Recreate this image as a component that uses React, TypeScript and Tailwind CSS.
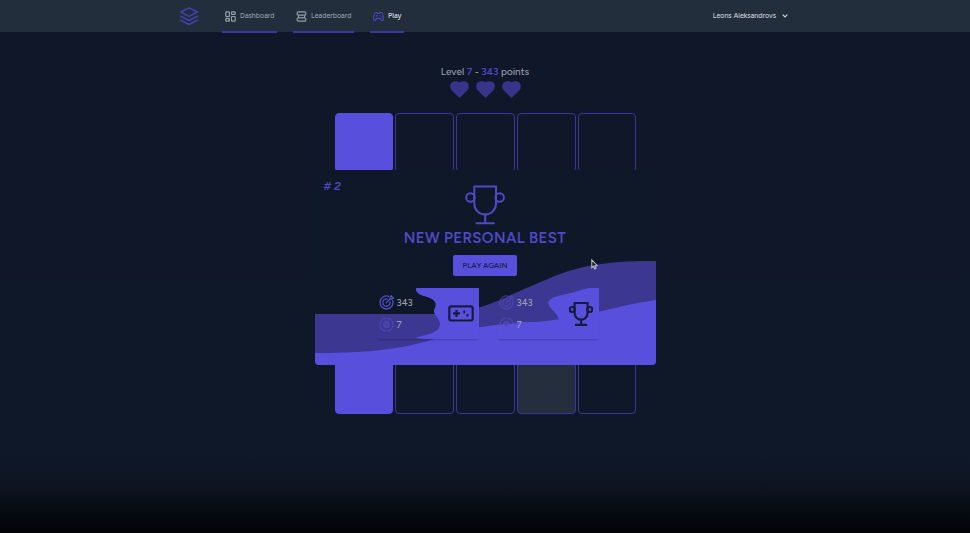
import React from "react";

const board = [
  "on", "off", "off", "off", "off",
  "off", "off", "off", "off", "off",
  "off", "off", "off", "off", "off",
  "off", "off", "off", "off", "off",
  "on", "off", "off", "hit", "off",
];

const cellStyles: Record<string, string> = {
  on: "bg-[#5850dc] border-[#5850dc]",
  off: "border-[#3a3599]",
  hit: "bg-[#252e3c] border-[#3a3599]",
};

function Layers() {
  return (
    <svg className="h-[19px] w-5" viewBox="0 0 20 19" fill="none" stroke="#4640b4" strokeWidth="1.500" strokeLinejoin="round" strokeLinecap="round">
      <path d="M9 1.300Q10 .8 11 1.300L18.300 5 11 8.900Q10 9.400 9 8.900L1.700 5Z" />
      <path d="M1.500 9.200 9 13Q10 13.500 11 13L18.500 9.200" />
      <path d="M1.500 13.200 9 17Q10 17.500 11 17L18.500 13.200" />
    </svg>
  );
}

function DashboardIcon() {
  return (
    <svg className="h-[11px] w-[11px]" viewBox="0 0 11 11" fill="none" stroke="#969ca9" strokeWidth="1.200">
      <rect x=".8" y=".8" width="3.600" height="4.800" rx=".6" />
      <rect x="6.500" y=".8" width="3.700" height="2.600" rx=".6" />
      <rect x=".8" y="7.700" width="3.600" height="2.500" rx=".6" />
      <rect x="6.500" y="5.500" width="3.700" height="4.700" rx=".6" />
    </svg>
  );
}

function LeaderboardIcon() {
  return (
    <svg className="h-[11px] w-[11px]" viewBox="0 0 11 11" fill="none" stroke="#969ca9" strokeWidth="1.200">
      <rect x="1.200" y=".8" width="8.600" height="3.400" rx="1" />
      <rect x="1.200" y="6.800" width="8.600" height="3.400" rx="1" />
      <path d="M2.500 4.200v2.600M8.500 4.200v2.600" />
    </svg>
  );
}

function ControllerIcon() {
  return (
    <svg className="h-[11px] w-[11px]" viewBox="0 0 11 11" fill="none" stroke="#4a44bd" strokeWidth="1.200" strokeLinejoin="round">
      <path d="M2.500 1.500h1.300l.5.800h2.400l.5-.8h1.300c1 0 1.600 3 1.800 6 .1 2-1.200 2.500-2 1.400L7.200 7.300H3.800L2.700 8.900C1.900 10 .6 9.500.7 7.500c.2-3 .8-6 1.800-6Z" />
      <path d="M2.700 4.700h2M3.700 3.700v2M6.700 4.100h.9M7.500 5.500h.9" strokeWidth=".9" />
    </svg>
  );
}

function Heart() {
  return (
    <svg className="h-[17px] w-[19px]" viewBox="0 0 19 17" fill="#38348c">
      <path d="M9.500 16.900 1.300 9.100C-.3 7-.1 3.500 1.500 1.700 3.500-.2 7.300-.3 9.500 1.300 11.700-.3 15.500-.2 17.500 1.700 19.100 3.500 19.300 7 17.700 9.100Z" />
    </svg>
  );
}

function Trophy({ className, weight }: { className: string; weight: number }) {
  return (
    <svg className={className} viewBox="0 0 40 40" fill="none" stroke="currentColor" strokeWidth={weight} strokeLinecap="round">
      <path d="M9.300 1.600H31v16.900c0 6.300-4.700 11-10.850 11S9.300 24.800 9.300 18.500Z" />
      <circle cx="5.400" cy="12.500" r="4.200" />
      <circle cx="34.700" cy="12.500" r="4.200" />
      <path d="M20.200 29.500v8.700M11.500 38.200h17.400" />
    </svg>
  );
}

function Target() {
  return (
    <svg className="h-[15px] w-[15px]" viewBox="0 0 15 15" fill="none" stroke="#554dc4" strokeWidth="1.300" strokeLinecap="round">
      <path d="M9.500 1.300A6.500 6.500 0 1 0 13.700 5.600" />
      <path d="M8.500 4A3.700 3.700 0 1 0 11 6.600" />
      <path d="M7.200 7.800 11.400 3.600M11.100 3.900V2l1.300-1.300.5 1.500 1.400.5L13 4Z" />
    </svg>
  );
}

function LevelIcon() {
  return (
    <svg className="h-[15px] w-[15px] opacity-60" viewBox="0 0 15 15" fill="none" stroke="#5b53d0" strokeWidth="1.200">
      <circle cx="7.500" cy="7.500" r="6.500" strokeDasharray="9 1.200" />
      <circle cx="7.500" cy="7.500" r="2.800" fill="#4e47b5" />
    </svg>
  );
}

function Gamepad() {
  return (
    <svg className="h-[17px] w-[26px]" viewBox="0 0 26 17" fill="none" stroke="#171b3b" strokeWidth="2.200">
      <rect x="1.300" y="1.300" width="23.400" height="14.200" rx="2" />
      <path d="M5 8.400h7M8.500 5v7" />
      <path d="M16.200 5.600v2.700M19.500 9v2.600" strokeWidth="1.900" />
    </svg>
  );
}

function StatCard({ shape, faint, children }: { shape: string; faint?: boolean; children: React.ReactNode }) {
  return (
    <div className="relative flex h-[51px] w-[102px] items-center justify-between rounded-sm shadow-[0_2px_2px_-1px_rgba(25,22,90,0.35)]">
      <svg className="absolute inset-0 h-[51px] w-[102px]" viewBox="0 0 102 51" fill="#5850dc">
        <path d={shape} />
      </svg>
      <div className="relative flex h-full flex-col justify-between pt-[7px] pb-[7px] pl-[2px] text-[9.5px] leading-[15px] font-medium text-[#9ca0b4]">
        <div className={faint ? "flex items-center gap-[3px] [&>svg]:opacity-60" : "flex items-center gap-[3px]"}>
          <Target />
          <span>343</span>
        </div>
        <div className="flex items-center gap-[3px]">
          <LevelIcon />
          <span>7</span>
        </div>
      </div>
      <div className="relative pr-[5px] text-[#171b3b]">{children}</div>
    </div>
  );
}

function NavItem({ label, icon, className, active }: { label: string; icon: React.ReactNode; className: string; active?: boolean }) {
  return (
    <a className={`flex h-[33px] items-center gap-[4px] border-b-2 border-[#3b379b] pt-px pl-[3px] ${className} ${active ? "font-semibold text-[#c9ced8]" : "text-[#929aa7]"}`}>
      {icon}
      <span>{label}</span>
    </a>
  );
}

export default function App() {
  return (
    <div className="flex h-[533px] w-[970px] flex-col overflow-hidden bg-[linear-gradient(to_bottom,#0f1729_0px,#0f1829_455px,#0c141f_490px,#060a11_512px,#020305_533px)] font-['Figtree','Inter',sans-serif]">
      <header className="flex h-8 shrink-0 items-start bg-[#232e3c] pr-[182px] pl-[179px] text-[7.1px] font-medium">
        <div className="flex h-8 w-[43px] items-center">
          <Layers />
        </div>
        <nav className="flex gap-4">
          <NavItem label="Dashboard" icon={<DashboardIcon />} className="w-[55px]" />
          <NavItem label="Leaderboard" icon={<LeaderboardIcon />} className="w-[61px]" />
          <NavItem label="Play" icon={<ControllerIcon />} className="w-[34px]" active />
        </nav>
        <button className="ml-auto flex h-8 items-center gap-1.5 text-[#cbd0d8]">
          <span>Leons Aleksandrovs</span>
          <svg className="h-[4px] w-[6px]" viewBox="0 0 6 4" fill="none" stroke="#cbd0d8" strokeWidth="1.200"><path d="M.7.7 3 3 5.300.7" /></svg>
        </button>
      </header>

      <main className="flex flex-col items-center pt-[33px]">
        <p className="h-[14px] text-[10px] leading-[14px] font-medium text-[#969cab]">
          Level <span className="font-semibold text-[#5049c6]">7</span> - <span className="font-semibold text-[#5049c6]">343</span> points
        </p>
        <div className="mt-[2px] flex h-[17px] gap-[7px]">
          <Heart /><Heart /><Heart />
        </div>

        <div className="relative mt-[15px] ml-px h-[301px] w-[302px]">
          <div className="grid h-full grid-cols-5 gap-[2px]">
            {board.map((state, i) => (
              <div key={i} className={`rounded-[4px] border ${cellStyles[state]}`} />
            ))}
          </div>

          <section className="absolute top-[57px] -left-[20px] flex h-[195px] w-[341px] flex-col items-center overflow-hidden rounded-b-[4px] bg-[#0f1828]">
            <svg className="absolute inset-0 h-[195px] w-[341px]" viewBox="0 0 341 195">
              <path d="M0 144H120C146 143 166 138 185 130C209 119 225 112 245 104C276 93 302 91 341 91V195H0Z" fill="#3c3791" />
              <path d="M0 183C40 183 72 181 101 174C126 168 143 160 166 157C195 152 226 154 263 146C291 141 311 134 341 130V195H0Z" fill="#5850dc" />
            </svg>
            <span className="absolute top-[9px] left-[9px] text-[12px] leading-[14px] font-semibold italic text-[#4e47c3]"># 2</span>
            <Trophy className="relative mt-[15px] h-10 w-10 shrink-0 text-[#5049c6]" weight={2} />
            <h1 className="relative mt-[4px] text-[15px] leading-[18px] font-semibold tracking-[0.35px] text-[#5049c6]">NEW PERSONAL BEST</h1>
            <button className="relative mt-[8px] h-[21px] w-16 shrink-0 rounded-[2px] bg-[#5850dc] text-[7.7px] font-semibold text-[#1f1f55]">PLAY AGAIN</button>
            <div className="relative mt-[12px] flex gap-[18px] pl-[5px]">
              <StatCard shape="M39 0H102V51H48L38 50C45 47 63 46 63 36C63 30 56 27 57 22C61 15 57 12 53 10C48 8 40 7 39 2Z">
                <Gamepad />
              </StatCard>
              <StatCard faint shape="M102 0H92C85 1 81 3 74 5C66 7 53 8 51 15C53 22 60 24 61 30L64 34H20V51H102Z">
                <Trophy className="mr-[1px] h-6 w-6" weight={3.6} />
              </StatCard>
            </div>
          </section>
        </div>
      </main>

      <svg className="absolute top-[259px] left-[591px] h-[11px] w-[7px]" viewBox="0 0 7 11" fill="#151820" stroke="#b8bdc5" strokeWidth="1.100"><path d="M.8.900V8.800L2.600 7.200 3.800 9.900 5.100 9.300 3.900 6.700H6.300Z" /></svg>
    </div>
  );
}
